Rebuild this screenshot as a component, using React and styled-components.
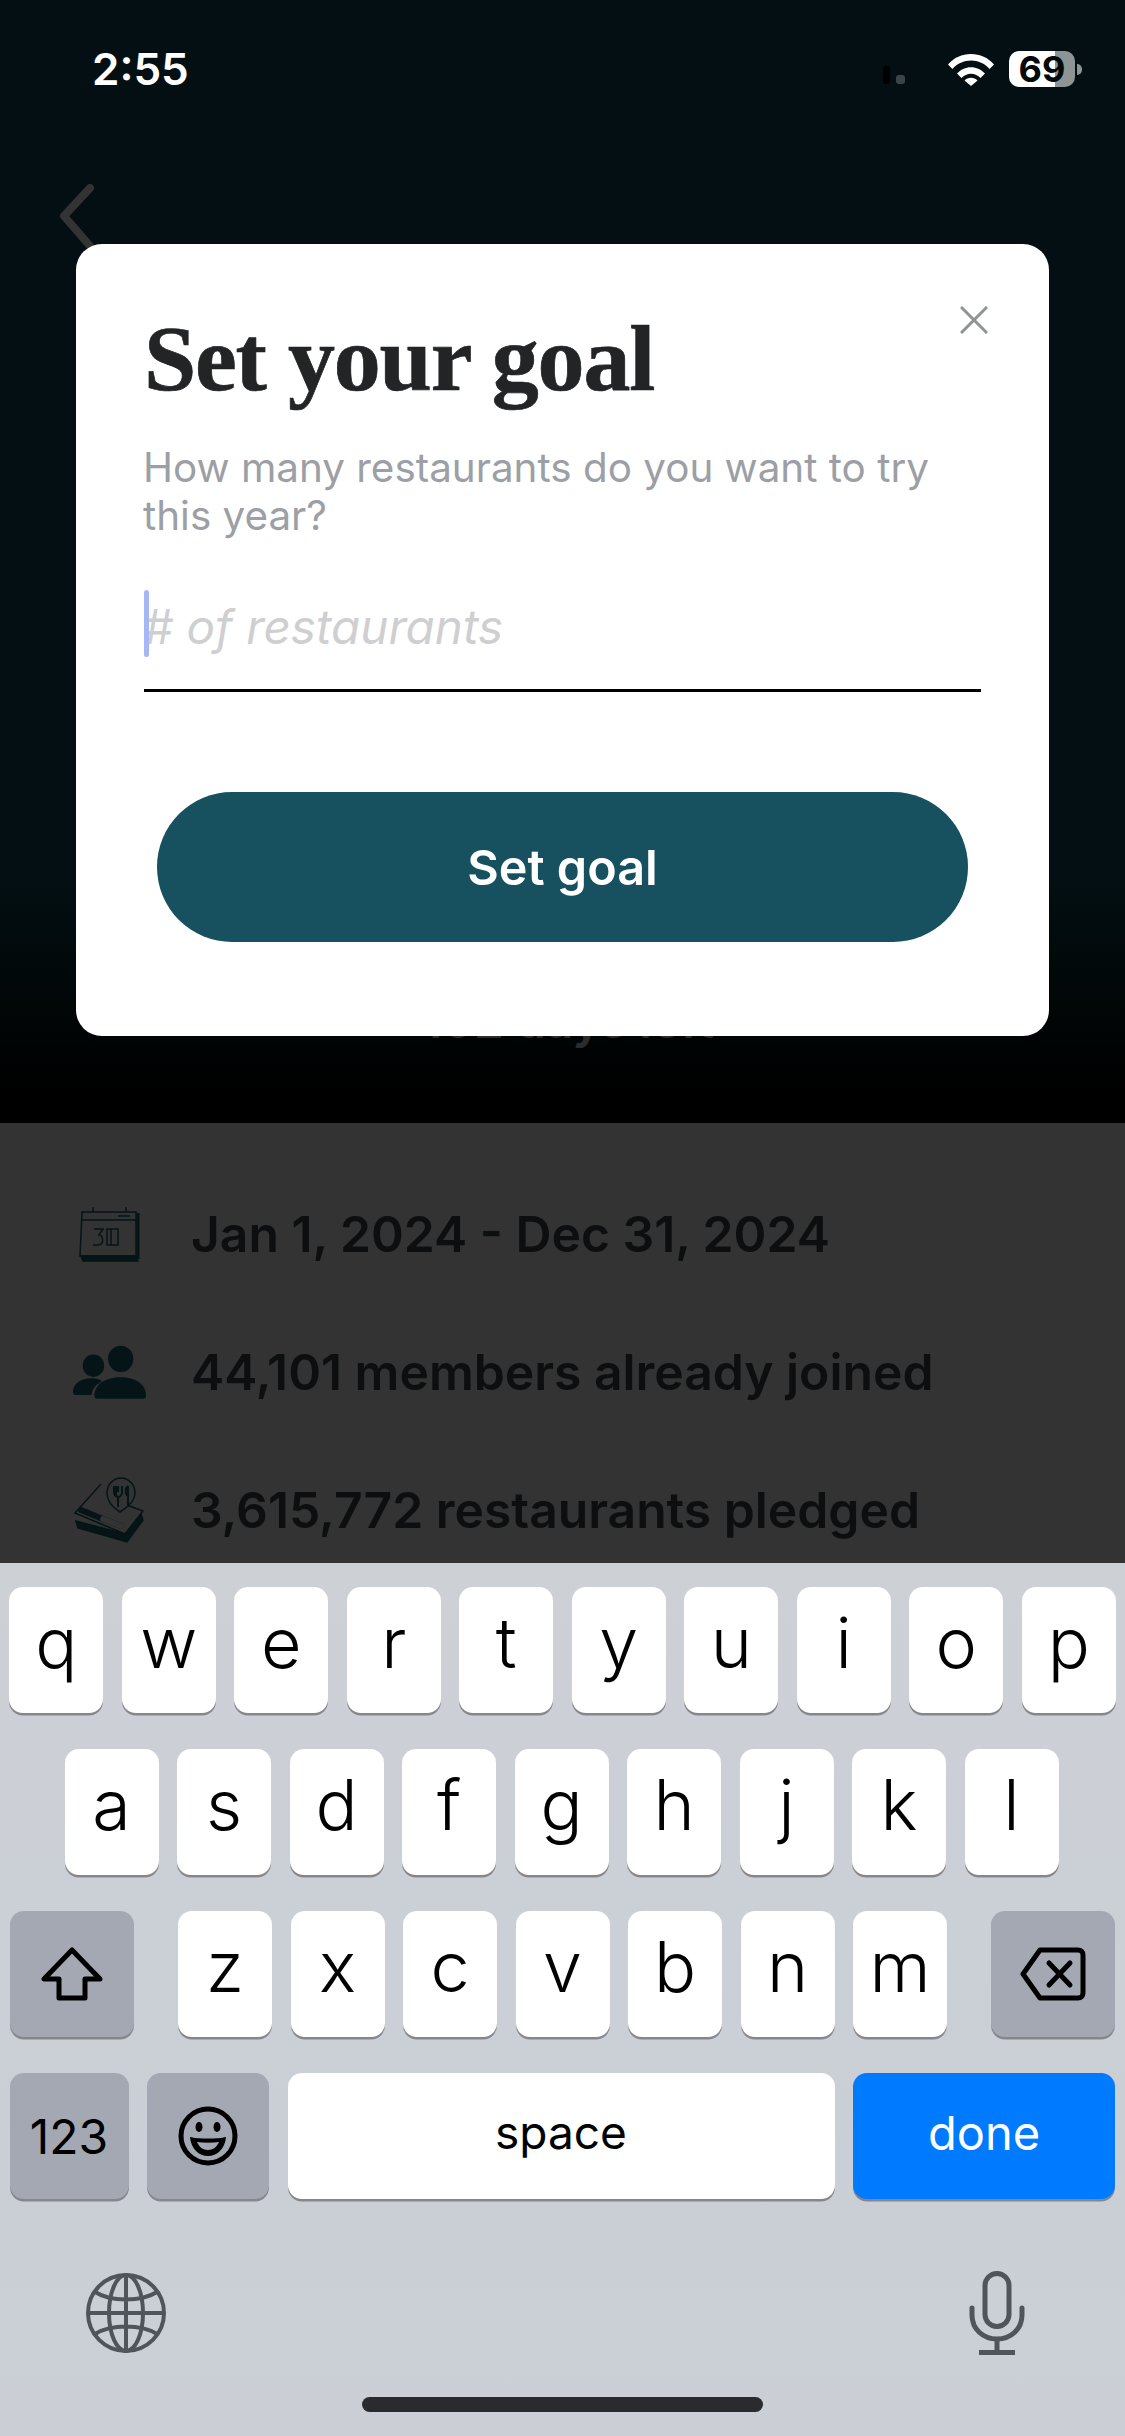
import React from "react";
import styled, { createGlobalStyle } from "styled-components";

const GlobalStyle = createGlobalStyle`
  html, body { margin: 0; padding: 0; background: #000; }
  * { box-sizing: border-box; }
`;

const sans = `Inter, "Liberation Sans", sans-serif`;

const Screen = styled.div`
  position: relative;
  width: 1125px;
  height: 2436px;
  overflow: hidden;
  display: flex;
  flex-direction: column;
  font-family: ${sans};
`;

const Hero = styled.section`
  height: 1123px;
  background: linear-gradient(#030f12 0, #030f12 880px, #000 1090px, #000 100%);
  display: flex;
  flex-direction: column;
`;

const StatusBar = styled.div`
  height: 180px;
  padding: 44px 43px 0 92px;
  display: flex;
  justify-content: space-between;
  align-items: flex-start;
`;

const Clock = styled.span`
  color: #fff;
  font-size: 44px;
  line-height: 50px;
  font-weight: 600;
`;

const StatusIcons = styled.div`
  display: flex;
  align-items: center;
  padding-top: 7px;
`;

const SignalDots = styled.svg`
  width: 24px;
  height: 20px;
  margin: 14px 41px 0 0;
`;

const Battery = styled.div`
  width: 66px;
  height: 36px;
  margin-left: 15px;
  border-radius: 10px;
  background: linear-gradient(90deg, #fff 46px, #8e9495 46px);
  color: #02090b;
  font-size: 36px;
  font-weight: 700;
  line-height: 36px;
  text-align: center;
`;

const BatteryNub = styled.div`
  width: 5px;
  height: 11px;
  margin-left: 2px;
  border-radius: 0 6px 6px 0;
  background: #8e9495;
`;

const BackIcon = styled.svg`
  width: 40px;
  height: 70px;
  margin-left: 58px;
`;

const HiddenBlock = styled.div`
  margin-top: auto;
  padding-bottom: 74px;
  display: flex;
  justify-content: center;
  padding-left: 11px;
`;

const DaysLeft = styled.div`
  font-size: 48px;
  line-height: 56px;
  font-weight: 600;
  color: #2b2b2b;
`;

const Details = styled.section`
  height: 440px;
  background: #333;
  padding-top: 82px;
  display: flex;
  flex-direction: column;
  gap: 80px;
`;

const DetailRow = styled.div`
  height: 58px;
  padding-left: 70px;
  display: flex;
  align-items: center;
`;

const DetailIcon = styled.div`
  width: 78px;
  height: 68px;
  margin-right: 43px;
  display: flex;
  align-items: center;
  justify-content: center;
  flex: none;
`;

const DetailText = styled.span`
  color: #0c0e0f;
  font-size: 49.800px;
  line-height: 58px;
  font-weight: 600;
  white-space: nowrap;
`;

const Modal = styled.div`
  position: absolute;
  top: 244px;
  left: 76px;
  width: 973px;
  height: 792px;
  border-radius: 26px;
  background: #fff;
  padding: 61px 68px 0 68px;
`;

const CloseButton = styled.svg`
  position: absolute;
  top: 62px;
  right: 61px;
  width: 28px;
  height: 28px;
`;

const Title = styled.h1`
  margin: 0;
  color: #222426;
  font-family: "Liberation Serif", serif;
  font-size: 94px;
  line-height: 106px;
  font-weight: 700;
  letter-spacing: -1.2px;
  -webkit-text-stroke: 0.7px #222426;
`;

const Subtitle = styled.p`
  margin: 33px 0 0 -1px;
  width: 830px;
  color: #9c9fa5;
  font-size: 40.4px;
  line-height: 48px;
`;

const InputField = styled.div`
  position: relative;
  height: 117px;
  margin-top: 35px;
  border-bottom: 3px solid #000;
  display: flex;
  align-items: center;
  padding-bottom: 12px;
`;

const Caret = styled.span`
  position: absolute;
  left: 0;
  top: 15px;
  width: 5px;
  height: 67px;
  border-radius: 3px;
  background: #a6b6f6;
`;

const Placeholder = styled.span`
  margin-left: -1px;
  color: #cfcfd1;
  font-size: 47.6px;
  font-style: italic;
`;

const PrimaryButton = styled.div`
  width: 811px;
  height: 150px;
  margin: 100px 0 0 13px;
  border-radius: 75px;
  background: #17505e;
  color: #fff;
  font-size: 48.500px;
  font-weight: 600;
  display: flex;
  align-items: center;
  justify-content: center;
`;

const Keyboard = styled.section`
  flex: 1;
  background: linear-gradient(#cdd0d5, #cacfd7 70%, #cbcfd5);
  padding-top: 24px;
  display: flex;
  flex-direction: column;
  gap: 36px;
  position: relative;
`;

const KeyRow = styled.div`
  display: flex;
  justify-content: ${(p) => p.$justify || "center"};
  gap: 18.5px;
  padding: ${(p) => p.$pad || "0 10px"};
`;

const KeyGroup = styled.div`
  display: flex;
  gap: 18.5px;
`;

const Key = styled.div`
  width: ${(p) => p.$width || 94}px;
  flex: ${(p) => (p.$grow ? 1 : "none")};
  height: 126px;
  border-radius: 14px;
  background: ${(p) => p.$bg || "#fff"};
  color: ${(p) => p.$color || "#000"};
  box-shadow: 0 2.5px 0 #85878c;
  font-size: ${(p) => p.$size || 70}px;
  font-weight: ${(p) => p.$weight || 350};
  display: flex;
  align-items: center;
  justify-content: center;
  padding-bottom: ${(p) => p.$lift ?? 15}px;
`;

const BottomIcons = styled.div`
  margin-top: 36px;
  padding: 0 100px 0 86px;
  display: flex;
  justify-content: space-between;
  align-items: center;
`;

const HomeBar = styled.div`
  position: absolute;
  left: 362px;
  bottom: 24px;
  width: 401px;
  height: 15px;
  border-radius: 8px;
  background: #2a2b2e;
`;

const CalendarIcon = () => (
  <svg width="62" height="56" viewBox="0 0 62 56" fill="none" stroke="#051416" strokeWidth="1.5">
    <path d="M3 50h55l2 5H5z" fill="#051416" />
    <path d="M60 7v46" strokeWidth="3" />
    <path d="M4 6h54v44H2z" />
    <path d="M3 14h55M15 1v5M48 1v5M40 10h12" />
    <path d="M16 23h9l-4 6c5 0 5 10-1 10h-5M29 23h11v16H29zM33 23v16" />
  </svg>
);

const UsersIcon = () => (
  <svg width="74" height="55" viewBox="0 0 76 56" fill="#051416">
    <ellipse cx="22" cy="21" rx="11" ry="11.5" />
    <ellipse cx="50" cy="14" rx="13" ry="13.5" />
    <path d="M1 48c0-9 9-14 19-14 5 0 8 1 11 3-6 3-10 7-11 14H4c-2 0-3-1-3-3z" />
    <path d="M26 55c-2 0-3-1-3-3 0-12 12-19 27-19s26 7 26 19c0 2-1 3-3 3z" />
  </svg>
);

const PledgeIcon = () => (
  <svg width="72" height="66" viewBox="0 0 72 66" fill="none" stroke="#051416" strokeWidth="1.5">
    <path d="M3 44l2 7 49 14 16-22-2-6-16 20z" fill="#051416" />
    <path d="M28 7L2 36l50 21 18-23-16-6" />
    <path d="M8 33l22 9 18 7" strokeWidth="6" stroke="#051416" strokeLinecap="round" />
    <path d="M30 42l18 7" strokeWidth="6" stroke="#333" strokeLinecap="round" />
    <path d="M47 35C39 30 34 24 34 16 34 8 40 1 48 1s14 7 14 15c0 8-7 14-15 19z" fill="#333" />
    <path d="M43 9v8c0 2 1 3 2 3v10M41 9v6c0 3 2 5 4 5 2 0 4-2 4-5V9M45 9v6M55 9v21M55 9c-3 2-3 8 0 10" strokeWidth="2" />
  </svg>
);

const topRow = "qwertyuiop".split("");
const midRow = "asdfghjkl".split("");
const lowRow = "zxcvbnm".split("");
const GREY_KEY = "#a3a8b2";

const App = () => {
  return (
    <Screen>
      <GlobalStyle />
      <Hero>
        <StatusBar>
          <Clock>2:55</Clock>
          <StatusIcons>
            <SignalDots viewBox="0 0 24 20">
              <rect x="0" y="0" width="7" height="18" rx="3" fill="#000" />
              <rect x="13" y="9" width="9" height="9" rx="3" fill="#3c4447" />
            </SignalDots>
            <svg width="46" height="33" viewBox="0 0 46 33" fill="#fff">
              <path d="M0 11.5C6 4.5 14 1 23 1s17 3.5 23 10.5l-4.4 4.4C36.600 10.300 30 7.400 23 7.400S9.400 10.300 4.400 15.900z" />
              <path d="M9 20.500c3.600-4 8.600-6.300 14-6.300s10.400 2.300 14 6.300l-4.500 4.500c-2.400-2.700-5.800-4.300-9.500-4.300s-7.100 1.600-9.500 4.300z" />
              <path d="M16.500 27.500c1.700-1.700 4-2.700 6.500-2.700s4.800 1 6.500 2.700L23 33z" />
            </svg>
            <Battery>69</Battery>
            <BatteryNub />
          </StatusIcons>
        </StatusBar>
        <BackIcon viewBox="0 0 40 70" fill="none" stroke="#333" strokeWidth="8" strokeLinecap="round" strokeLinejoin="round">
          <path d="M32 8L6 36l26 30" />
        </BackIcon>
        <HiddenBlock>
          <DaysLeft>102 days left</DaysLeft>
        </HiddenBlock>
      </Hero>

      <Details>
        <DetailRow>
          <DetailIcon><CalendarIcon /></DetailIcon>
          <DetailText>Jan 1, 2024 - Dec 31, 2024</DetailText>
        </DetailRow>
        <DetailRow>
          <DetailIcon><UsersIcon /></DetailIcon>
          <DetailText>44,101 members already joined</DetailText>
        </DetailRow>
        <DetailRow>
          <DetailIcon><PledgeIcon /></DetailIcon>
          <DetailText>3,615,772 restaurants pledged</DetailText>
        </DetailRow>
      </Details>

      <Keyboard>
        <KeyRow>
          {topRow.map((k) => <Key key={k}>{k}</Key>)}
        </KeyRow>
        <KeyRow $pad="0 11px 0 9px">
          {midRow.map((k) => <Key key={k}>{k}</Key>)}
        </KeyRow>
        <KeyRow $justify="space-between">
          <Key $width={124} $bg={GREY_KEY} $lift={0}>
            <svg width="62" height="54" viewBox="0 0 62 54" fill="none" stroke="#000" strokeWidth="5" strokeLinejoin="round">
              <path d="M31 3L3 32h15v19h26V32h15z" />
            </svg>
          </Key>
          <KeyGroup>
            {lowRow.map((k) => <Key key={k}>{k}</Key>)}
          </KeyGroup>
          <Key $width={124} $bg={GREY_KEY} $lift={0}>
            <svg width="66" height="54" viewBox="0 0 66 54" fill="none" stroke="#000" strokeWidth="5" strokeLinejoin="round" strokeLinecap="round">
              <path d="M20 3h38c3 0 5 2 5 5v38c0 3-2 5-5 5H20L3 27z" />
              <path d="M29 16l21 22M50 16L29 38" />
            </svg>
          </Key>
        </KeyRow>
        <KeyRow $pad="0 10px 0 9.500px">
          <Key $width={119} $bg={GREY_KEY} $size={48} $weight={400} $lift={0}>123</Key>
          <Key $width={122} $bg={GREY_KEY} $lift={0}>
            <svg width="60" height="60" viewBox="0 0 60 60" fill="none" stroke="#000" strokeWidth="5">
              <circle cx="30" cy="30" r="27" />
              <ellipse cx="21" cy="21" rx="3.500" ry="5" fill="#000" stroke="none" />
              <ellipse cx="39" cy="21" rx="3.500" ry="5" fill="#000" stroke="none" />
              <path d="M12 31c8 2 28 2 36 0-1 12-9 19-18 19S13 43 12 31z" fill="#000" stroke="none" />
              <path d="M19 36c7 1 15 1 22 0-2 5-6 8-11 8s-9-3-11-8z" fill="#a3a8b2" stroke="none" />
            </svg>
          </Key>
          <Key $grow $size={46} $weight={400} $lift={8}>space</Key>
          <Key $width={262} $bg="#007aff" $color="#fff" $size={47} $weight={400} $lift={8}>done</Key>
        </KeyRow>
        <BottomIcons>
          <svg width="80" height="80" viewBox="0 0 80 80" fill="none" stroke="#50555c" strokeWidth="4">
            <circle cx="40" cy="40" r="38" />
            <ellipse cx="40" cy="40" rx="17" ry="38" />
            <path d="M40 2v76M2 40h76M9 19c16 10 46 10 62 0M9 61c16-10 46-10 62 0" />
          </svg>
          <svg width="56" height="84" viewBox="0 0 56 84" fill="none" stroke="#50555c" strokeWidth="5" strokeLinecap="round">
            <rect x="16" y="2.500" width="24" height="53" rx="12" />
            <path d="M3 37v7c0 14 11 24 25 24s25-10 25-24v-7" />
            <path d="M28 68v13" strokeLinecap="butt" />
            <path d="M10 81.500h36" strokeWidth="5" strokeLinecap="butt" />
          </svg>
        </BottomIcons>
        <HomeBar />
      </Keyboard>

      <Modal>
        <CloseButton viewBox="0 0 28 28" fill="none" stroke="#8f9398" strokeWidth="3">
          <path d="M1 1l26 26M27 1L1 27" />
        </CloseButton>
        <Title>Set your goal</Title>
        <Subtitle>How many restaurants do you want to try this year?</Subtitle>
        <InputField>
          <Caret />
          <Placeholder># of restaurants</Placeholder>
        </InputField>
        <PrimaryButton>Set goal</PrimaryButton>
      </Modal>
    </Screen>
  );
};

export default App;
